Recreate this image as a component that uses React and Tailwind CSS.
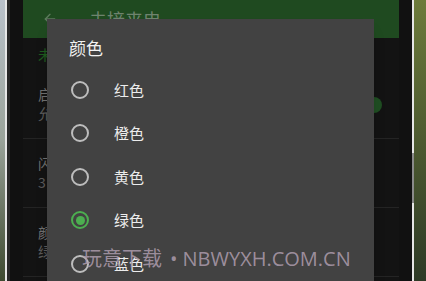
import { ArrowLeft } from 'lucide-react';

const cjk = { fontFamily: '"Noto Sans CJK SC", "Noto Sans", sans-serif' };
const latin = { fontFamily: '"Open Sans", sans-serif' };

const colors = ['红色', '橙色', '黄色', '绿色', '蓝色'];

const Radio = ({ checked }) =>
  checked ? (
    <span className="flex h-[18px] w-[18px] items-center justify-center rounded-full border-2 border-[#4caf50]">
      <span className="h-[9px] w-[9px] rounded-full bg-[#4caf50]" />
    </span>
  ) : (
    <span className="h-[18px] w-[18px] rounded-full border-2 border-[#bdbdbd]" />
  );

const ListRow = ({ title, sub }) => (
  <div className="flex h-[69px] flex-col justify-center border-b border-[#242424] pl-[15px] text-[14px] leading-[19px]">
    <span className="text-[#6e6e6e]">{title}</span>
    <span className="text-[#5a5a5a]">{sub}</span>
  </div>
);

export default function App() {
  return (
    <div className="flex h-[281px] w-[426px] overflow-hidden bg-black" style={cjk}>
      <div className="w-[5px] bg-gradient-to-b from-[#b9c1ca] via-[#9aa39a] to-[#3e4a30]" />
      <div className="w-[2px] bg-[#e6e6e6]" />
      <div className="flex w-[16px]">
        <div className="w-[3px] bg-[#262626]" />
        <div className="flex-1 bg-[#111]" />
      </div>

      <div className="relative w-[376px] bg-[#131313]">
        <div className="flex h-[38px] items-center bg-[#1f4a20] pl-[19px]">
          <ArrowLeft size={16} strokeWidth={2} className="text-[#5d7a5d]" />
          <span className="ml-[31px] text-[18px] text-[#6f836f]">未接来电</span>
        </div>

        <div className="flex h-[32px] items-center pl-[15px] text-[14px] text-[#1e5a1e]">未接来电</div>
        <div className="relative">
          <ListRow title="启用" sub="允许通知" />
          <span className="absolute right-[17px] top-[27px] h-[16px] w-[16px] rounded-full bg-[#1f4d22]" />
        </div>
        <ListRow title="闪烁" sub="3" />
        <ListRow title="颜色" sub="绿色" />

        <div className="absolute left-[24px] top-[19px] h-[300px] w-[327px] bg-[#424242] shadow-lg">
          <div className="pl-[22px] pt-[17px] text-[17px] leading-[24px] text-[#f2f2f2]">颜色</div>
          <div className="mt-[8px] flex flex-col">
            {colors.map((c, i) => (
              <div key={c} className="flex h-[43.5px] items-center pl-[24px]">
                <Radio checked={i === 3} />
                <span className="ml-[25px] text-[15px] text-[#ececec]">{c}</span>
              </div>
            ))}
          </div>
        </div>

        <div className="pointer-events-none absolute left-[59px] top-[245px] whitespace-nowrap text-[20px] leading-[26px] text-[#a898a8]/90">
          玩意下载
          <span className="ml-[8px] mr-[5px]" style={latin}>•</span>
          <span style={latin}>NBWYXH.COM.CN</span>
        </div>
      </div>

      <div className="w-[13px] bg-[#111]" />
      <div className="relative w-[2px] bg-[#e6e6e6]">
        <div className="absolute left-0 top-[153px] h-[50px] w-[2px] bg-[#8a8a8a]" />
      </div>
      <div className="flex-1 bg-gradient-to-b from-[#6d7b3b] via-[#4d5a30] to-[#2e3a26]" />
    </div>
  );
}
